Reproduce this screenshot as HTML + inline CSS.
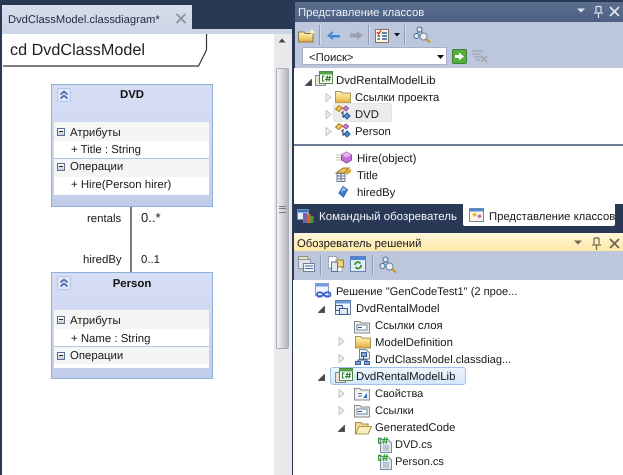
<!DOCTYPE html>
<html><head><meta charset="utf-8"><style>
html,body{margin:0;padding:0}
body{width:623px;height:475px;position:relative;overflow:hidden;background:#293955;font-family:"Liberation Sans",sans-serif;font-size:11.3px;color:#1a1a1a;text-rendering:geometricPrecision}
#w{position:absolute;left:0;top:0;width:623px;height:475px;overflow:hidden;filter:blur(.3px)}
.b{position:absolute}
.t{position:absolute;white-space:nowrap;line-height:16px;height:16px}
svg{position:absolute;overflow:visible}
.cls{position:absolute;left:51px;width:162px;background:linear-gradient(#d7ddf5,#ccd6f0 60%,#c0cce8);border:1px solid #8db0da;box-sizing:border-box}
.row{position:absolute;left:2px;width:155px;height:19px;background:#f5f5f5}
.wh{position:absolute;left:2px;width:155px;background:#fff}
.ln{position:absolute;left:2px;width:155px;height:1px;background:#b4c6e6}
.mn{position:absolute;left:5px;width:6px;height:6px;border:1px solid #5c6f8e;background:linear-gradient(#fff,#c4ccd9)}
.mn:after{content:"";position:absolute;left:1px;top:2px;width:4px;height:1px;background:#222}
.chev{position:absolute;left:5px;top:3px;width:12px;height:12px;border:1px solid #b5c4e0;background:#dfe6f8;border-radius:2px}
.sep{position:absolute;width:1px;background:#8f9ab3;border-right:1px solid #d5dcea}
.c{font-size:11.4px}
</style></head><body><div id="w">
<svg width="0" height="0" style="position:absolute"><defs>
<linearGradient id="gf" x1="0" y1="0" x2="0" y2="1"><stop offset="0" stop-color="#fdf0bb"/><stop offset=".5" stop-color="#f5d77e"/><stop offset="1" stop-color="#dca93a"/></linearGradient>
<symbol id="tri" viewBox="0 0 7 9"><path d="M1 0.500 L6 4.500 L1 8.500Z" fill="#f0f0f0" stroke="#c4c4c4"/></symbol>
<symbol id="open" viewBox="0 0 7 7"><path d="M6.500 0.500V6.500H0.500Z" fill="#444" stroke="#555"/></symbol>
<symbol id="folder" viewBox="0 0 16 14"><path d="M0.500 3V1.500H6L7 3H15.500V13H0.500Z" fill="url(#gf)" stroke="#a89660"/></symbol>
<symbol id="refs" viewBox="0 0 16 14"><path d="M0.500 3V1.500H6L7 3H15.500V13H0.500Z" fill="#ececec" stroke="#8a8a8a"/><rect x="3" y="5" width="10" height="5" fill="#fff" stroke="#6f87a8"/><path d="M4 7.500H8" stroke="#2f5a9c"/></symbol>
<symbol id="proj" viewBox="0 0 18 16"><rect x="0.500" y="4.500" width="10" height="10" fill="#e8e4d0" stroke="#7a8fa8"/><rect x="4.500" y="0.500" width="13" height="12" fill="#fff" stroke="#4f8a4a"/><rect x="5" y="1" width="12" height="2.500" fill="#4fa63f"/><path d="M9.500 5H7.500V10H9.500M12.500 4.500L11.500 10.500M15 4.500L14 10.500M10.500 6.500H16M10 8.500H15.500" stroke="#2f7a2a" fill="none" stroke-width="1.100"/></symbol>
<symbol id="cls" viewBox="0 0 16 15"><path d="M0.500 4L4 0.500L7.500 3L4 6.500Z" fill="#f3c24a" stroke="#a87f20"/><path d="M8 3.500L11 1L13.500 3.500L11 6Z" fill="#d77cd8" stroke="#8f4a9c"/><path d="M9 11L12 8L15 11L12 14Z" fill="#4a90dd" stroke="#245a9c"/><path d="M8 6V12H9M6 8H8" stroke="#333" fill="none"/></symbol>
<symbol id="cs" viewBox="0 0 14 16"><path d="M2.500 2.500H10L13.500 6V15.500H2.500Z" fill="#dfe6f0" stroke="#7f8da3"/><path d="M5 9H11M5 11H11M5 13H11" stroke="#97a5ba"/><path d="M3.500 1.500H0.500V6H3.500" stroke="#2e9a28" fill="none" stroke-width="1.400"/><path d="M6.500 0L5.500 7M9 0L8 7M4.500 2.200H10M4 4.600H9.500" stroke="#2e9a28" fill="none"/></symbol>
<symbol id="find" viewBox="0 0 18 18"><circle cx="6.500" cy="3.500" r="2.500" fill="#dfe8f5" stroke="#3f6a9c"/><circle cx="3.500" cy="10" r="2.500" fill="#dfe8f5" stroke="#3f6a9c"/><path d="M5.500 6L4 8M8 5.500L10 8" stroke="#3f6a9c"/><circle cx="10.500" cy="10.500" r="3.500" fill="#e9f0fa" stroke="#6f7f95"/><path d="M13 13L17 16.500" stroke="#cf9a2a" stroke-width="2.200"/></symbol>
</defs></svg>

<!-- left document well -->
<div class="b" style="left:2px;top:5px;width:190px;height:24px;background:linear-gradient(#d6deeb,#cdd6e6)"></div>
<div class="t" style="left:8px;top:12px;font-size:11.200px;color:#1f2a3c">DvdClassModel.classdiagram*</div>
<svg style="left:176px;top:14px" width="10" height="9"><path d="M0.500 0L9.500 9M9.500 0L0.500 9" stroke="#8a93a3" stroke-width="1.900"/></svg>
<div class="b" style="left:2px;top:29px;width:290px;height:5px;background:#cdd6e6"></div>
<div class="b" style="left:2px;top:34px;width:272px;height:441px;background:#fff"></div>
<div class="b" style="left:274px;top:34px;width:18px;height:441px;background:#e9e9ec"></div>
<svg style="left:278px;top:38px" width="8" height="5"><path d="M0.500 4.500L4 0.500L7.500 4.500Z" fill="#444"/></svg>
<div class="b" style="left:276px;top:68px;width:13px;height:281px;box-sizing:border-box;border:1px solid #a9adb5;border-radius:2px;background:linear-gradient(90deg,#f4f4f4,#d2d3d6 55%,#b2b4b8)"></div>
<div class="b" style="left:279px;top:206px;width:7px;height:5px;border-top:1px solid #7c7c7c;border-bottom:1px solid #7c7c7c"></div>
<div class="b" style="left:279px;top:208px;width:7px;height:1px;background:#7c7c7c"></div>

<!-- frame label -->
<svg style="left:3px;top:34px" width="206" height="33"><path d="M203.500 0V16L195.500 32H0" fill="none" stroke="#333" stroke-width="1.200"/></svg>
<div class="t" style="left:10px;top:39px;height:22px;line-height:22px;font-size:16.200px;color:#222">cd DvdClassModel</div>

<!-- DVD class -->
<div class="cls" style="top:84px;height:123px">
 <div class="chev"><svg style="left:1px;top:1px" width="10" height="10"><path d="M1.500 4.500L5 1.500L8.500 4.500M1.500 8.500L5 5.500L8.500 8.500" fill="none" stroke="#3a5fa8" stroke-width="1.500"/></svg></div>
 <div class="wh" style="top:37px;height:73px"></div>
 <div class="row" style="top:37px"></div>
 <div class="ln" style="top:73px"></div>
 <div class="row" style="top:74px;height:18px"></div>
 <div class="mn" style="top:43px"></div>
 <div class="mn" style="top:78px"></div>
</div>
<div class="t c" style="left:0;width:264px;text-align:center;top:87px;font-weight:bold;color:#111">DVD</div>
<div class="t c" style="left:70px;top:125px">Атрибуты</div>
<div class="t c" style="left:71px;top:142px">+ Title : String</div>
<div class="t c" style="left:70px;top:159px">Операции</div>
<div class="t c" style="left:71px;top:177px">+ Hire(Person hirer)</div>

<!-- connector -->
<div class="b" style="left:130px;top:207px;width:2px;height:66px;background:#7a7a7a"></div>
<div class="t c" style="left:87px;top:211px">rentals</div>
<div class="t" style="left:141px;top:210px;font-size:13px">0..*</div>
<div class="t c" style="left:83px;top:252px">hiredBy</div>
<div class="t c" style="left:141px;top:252px">0..1</div>

<!-- Person class -->
<div class="cls" style="top:272px;height:107px">
 <div class="chev"><svg style="left:1px;top:1px" width="10" height="10"><path d="M1.500 4.500L5 1.500L8.500 4.500M1.500 8.500L5 5.500L8.500 8.500" fill="none" stroke="#3a5fa8" stroke-width="1.500"/></svg></div>
 <div class="wh" style="top:37px;height:58px"></div>
 <div class="row" style="top:37px"></div>
 <div class="ln" style="top:73px"></div>
 <div class="row" style="top:74px;height:17px"></div>
 <div class="mn" style="top:43px"></div>
 <div class="mn" style="top:79px"></div>
</div>
<div class="t c" style="left:0;width:264px;text-align:center;top:276px;font-weight:bold;color:#111">Person</div>
<div class="t c" style="left:70px;top:313px">Атрибуты</div>
<div class="t c" style="left:71px;top:331px">+ Name : String</div>
<div class="t c" style="left:70px;top:348px">Операции</div>

<!-- class view panel -->
<div class="b" style="left:295px;top:2px;width:328px;height:20px;background:linear-gradient(#5a6e90,#4d6082)"></div>
<div class="t" style="left:298px;top:5px;color:#eef1f6;font-size:11.300px">Представление классов</div>
<svg style="left:577px;top:6px" width="44" height="12"><path d="M0 2.500H8L4 6.500Z" fill="#dfe4ee"/><path d="M19 0.500V6M24 0.500V6M17 7H26M21.500 7V12M19 0.500H24" stroke="#dfe4ee" fill="none" stroke-width="1.200"/><path d="M33 1L42 10M42 1L33 10" stroke="#dfe4ee" stroke-width="1.800"/></svg>
<div class="b" style="left:295px;top:22px;width:328px;height:46px;background:#bcc7de"></div>
<svg style="left:298px;top:28px" width="18" height="15" viewBox="0 0 18 15"><path d="M0.500 14V4H6L7 5.500H15V14Z" fill="url(#gf)" stroke="#8c7a46"/><path d="M14 0L15 3L18 4L15 5L14 8L13 5L10 4L13 3Z" fill="#fff6b0"/></svg>
<div class="sep" style="left:319px;top:25px;height:20px"></div>
<svg style="left:327px;top:31px" width="13" height="9"><path d="M0 4.500L6 0V2.500H13V6.500H6V9Z" fill="#3f86cf"/><path d="M6 2.500H13V4H3Z" fill="#a9d1f2"/></svg>
<svg style="left:350px;top:31px" width="13" height="9"><path d="M13 4.500L7 0V2.500H0V6.500H7V9Z" fill="#9aa1ae"/></svg>
<div class="sep" style="left:368px;top:25px;height:20px"></div>
<svg style="left:375px;top:27px" width="15" height="16"><rect x="0.500" y="2.500" width="13" height="13" fill="#fdf7e0" stroke="#7f7560"/><path d="M2 5L3.500 7L6 3.500" fill="none" stroke="#d22" stroke-width="1.300"/><path d="M7 6H12M7 9H12M7 12H12M2.500 9H5M2.500 12H5" stroke="#2f5fa8" stroke-width="1.400"/></svg>
<svg style="left:394px;top:33px" width="6" height="4"><path d="M0 0H6L3 3.500Z" fill="#111"/></svg>
<div class="sep" style="left:404px;top:25px;height:20px"></div>
<svg style="left:413px;top:26px" width="18" height="18"><use href="#find"/></svg>
<div class="b" style="left:302px;top:47px;width:145px;height:18px;box-sizing:border-box;background:#fff;border:1px solid #a7b1c6"></div>
<div class="t" style="left:309px;top:50px;font-size:11.300px">&lt;Поиск&gt;</div>
<svg style="left:437px;top:55px" width="7" height="4"><path d="M0 0H7L3.500 4Z" fill="#111"/></svg>
<svg style="left:452px;top:49px" width="15" height="15"><rect x="0.500" y="0.500" width="14" height="14" rx="1.500" fill="#55ad3e" stroke="#3d7f33"/><path d="M3 6H7V3.500L12 7.500L7 11.500V9H3Z" fill="#fff"/></svg>
<svg style="left:472px;top:50px" width="16" height="14"><path d="M0 1H11M0 4H9M2 7H9M4 10H8" stroke="#a3aab8" stroke-width="1.500"/><path d="M9 6L15 12M15 6L9 12" stroke="#a5a5ac" stroke-width="1.600"/></svg>

<div class="b" style="left:294px;top:68px;width:329px;height:136px;background:#fff"></div>
<div class="b" style="left:294px;top:144px;width:329px;height:2px;background:#6e7b92"></div>

<svg style="left:305px;top:79px" width="7" height="7"><use href="#open"/></svg>
<svg style="left:315px;top:71px" width="18" height="16"><use href="#proj"/></svg>
<div class="t" style="left:336px;top:73px;font-size:11.400px">DvdRentalModelLib</div>
<svg style="left:325px;top:93px" width="7" height="9"><use href="#tri"/></svg>
<svg style="left:335px;top:90px" width="16" height="14"><use href="#folder"/></svg>
<div class="t" style="left:355px;top:90px">Ссылки проекта</div>
<div class="b" style="left:333px;top:103px;width:59px;height:19px;background:#ececec;border-radius:3px;box-shadow:inset 0 0 0 1px #e2e2e2"></div>
<svg style="left:325px;top:110px" width="7" height="9"><use href="#tri"/></svg>
<svg style="left:335px;top:105px" width="16" height="15"><use href="#cls"/></svg>
<div class="t" style="left:355px;top:107px">DVD</div>
<svg style="left:325px;top:127px" width="7" height="9"><use href="#tri"/></svg>
<svg style="left:335px;top:123px" width="16" height="15"><use href="#cls"/></svg>
<div class="t" style="left:355px;top:124px">Person</div>

<svg style="left:336px;top:151px" width="16" height="13"><path d="M0 4H6M0 6.500H5M0 9H6" stroke="#c9c7a6"/><path d="M10.500 1L15.500 4V9L10.500 12L5.500 9V4Z" fill="#c66fd6" stroke="#8d4b9f"/><path d="M10.500 1L15 4L10.500 6.500L6 4Z" fill="#e7b6ee"/></svg>
<div class="t" style="left:357px;top:151px;font-size:11.500px">Hire(object)</div>
<svg style="left:335px;top:167px" width="17" height="15"><path d="M1 6L8 1H14L9 6Z" fill="#f0c35a" stroke="#9a7a30"/><path d="M2 6.500H10V14.500H2Z" fill="#e9eef5" stroke="#6d7d93"/><path d="M2 9H10M2 11.700H10M6 6.500V14.500" stroke="#6d7d93"/><path d="M10 5L16 1.500V5L12 8Z" fill="#d8a838"/></svg>
<div class="t" style="left:357px;top:168px">Title</div>
<svg style="left:338px;top:186px" width="10" height="12"><path d="M5 0.500L9.500 3.500L5.500 11L1 7Z" fill="#3f82d2" stroke="#2a5f9e"/><path d="M5 1L9 3.500L2.500 6Z" fill="#8fc0ee"/></svg>
<div class="t" style="left:357px;top:185px">hiredBy</div>

<!-- tabs -->
<svg style="left:297px;top:209px" width="18" height="15"><rect x="0.500" y="0.500" width="11" height="10" fill="#e5ecf7" stroke="#6f8ec0"/><rect x="1" y="1" width="10" height="2.500" fill="#3f6fb8"/><rect x="6" y="4" width="4" height="10" fill="#7a5fa8"/><rect x="10" y="5" width="3.500" height="9" fill="#cf6b2a"/><rect x="13.500" y="7" width="3" height="7" fill="#3f9a3a"/></svg>
<div class="t" style="left:319px;top:209px;color:#f2f4f8;font-size:11.500px">Командный обозреватель</div>
<div class="b" style="left:463px;top:204px;width:152px;height:22px;background:#fff;border-radius:0 0 2px 2px"></div>
<svg style="left:469px;top:208px" width="16" height="15"><rect x="0.500" y="0.500" width="14" height="13" fill="#fdf6e0" stroke="#6f88b0"/><rect x="1" y="1" width="13" height="2.500" fill="#4f86cc"/><path d="M3 6L6 4.500L8 7L5 9Z" fill="#e5b93f"/><path d="M8 8L11 6L13 8.500L10 10.500Z" fill="#c66fd6"/></svg>
<div class="t" style="left:489px;top:209px;font-size:11.300px">Представление классов</div>

<!-- solution explorer -->
<div class="b" style="left:294px;top:233px;width:329px;height:18px;background:linear-gradient(#fff6dc,#ffe8a6)"></div>
<div class="t" style="left:297px;top:236px;font-size:11.300px">Обозреватель решений</div>
<svg style="left:574px;top:237px" width="47" height="13"><path d="M0 3.500H8L4 7.500Z" fill="#6f674c"/><path d="M20 1V7M25 1V7M18 8H27M22.500 8V13M20 1H25" stroke="#6f674c" fill="none" stroke-width="1.200"/><path d="M36 2L45 11M45 2L36 11" stroke="#6f674c" stroke-width="1.800"/></svg>
<div class="b" style="left:294px;top:251px;width:329px;height:29px;background:#bcc7de"></div>
<svg style="left:298px;top:256px" width="17" height="16"><path d="M0.500 0.500H10V3.500H0.500Z" fill="#e9dfc0" stroke="#8f8f8f"/><rect x="0.500" y="3.500" width="12" height="9" fill="#dfe3ea" stroke="#8f959f"/><rect x="5.500" y="7.500" width="11" height="8" fill="#f4f6fa" stroke="#6f7f95"/><path d="M7 10H15M7 12.500H15" stroke="#3f6fae"/></svg>
<div class="sep" style="left:320px;top:255px;height:20px"></div>
<svg style="left:328px;top:256px" width="16" height="16"><path d="M0.500 0.500H9V4H14V15.500H4V12H0.500Z" fill="#fff" stroke="#7f8a9a" stroke-dasharray="2 1"/><path d="M8 4H15.500V11H8Z" fill="#f0d27a" stroke="#9a7f3a"/><path d="M3.500 6H9.500V15.500H3.500Z" fill="#dfe8f5" stroke="#4f78ae"/></svg>
<svg style="left:350px;top:256px" width="16" height="16"><rect x="0.500" y="0.500" width="15" height="15" fill="#e5ecf7" stroke="#5f82b5"/><rect x="1" y="1" width="14" height="3" fill="#4a87d2"/><path d="M5 9A3 3 0 0 1 10.500 7.500M11 9A3 3 0 0 1 5.500 11" fill="none" stroke="#2f9a2f" stroke-width="1.800"/></svg>
<div class="sep" style="left:372px;top:255px;height:20px"></div>
<svg style="left:379px;top:256px" width="18" height="18"><use href="#find"/></svg>

<div class="b" style="left:293px;top:280px;width:330px;height:195px;background:#fff"></div>

<svg style="left:315px;top:283px" width="18" height="16"><rect x="0.500" y="0.500" width="13" height="12" fill="#f2f6fc" stroke="#8aa0bf"/><rect x="1" y="1" width="12" height="2.500" fill="#6f9be0"/><path d="M2 11.500C2 8.500 6.500 8.500 8.500 11.500C10.500 14.500 15.500 14.500 15.500 11.500C15.500 8.500 10.500 8.500 8.500 11.500C6.500 14.500 2 14.500 2 11.500Z" fill="none" stroke="#3c5fd0" stroke-width="1.800"/></svg>
<div class="t" style="left:336px;top:284px;font-size:11.100px">Решение "GenCodeTest1" (2 прое...</div>
<svg style="left:318px;top:306px" width="7" height="7"><use href="#open"/></svg>
<svg style="left:335px;top:300px" width="17" height="16"><rect x="0.500" y="0.500" width="15" height="14" fill="#f1f5fb" stroke="#5a7aa5"/><rect x="1" y="1" width="14" height="2.500" fill="#6f9be0"/><rect x="0.500" y="5.500" width="7" height="5" fill="#dfe8f5" stroke="#3a5a90"/><rect x="4.500" y="8.500" width="8" height="6" fill="#dfe8f5" stroke="#3a5a90"/></svg>
<div class="t" style="left:356px;top:301px">DvdRentalModel</div>
<svg style="left:354px;top:320px" width="16" height="14"><use href="#refs"/></svg>
<div class="t" style="left:375px;top:318px">Ссылки слоя</div>
<svg style="left:338px;top:337px" width="7" height="9"><use href="#tri"/></svg>
<svg style="left:355px;top:335px" width="16" height="14"><use href="#folder"/></svg>
<div class="t" style="left:375px;top:335px">ModelDefinition</div>
<svg style="left:338px;top:354px" width="7" height="9"><use href="#tri"/></svg>
<svg style="left:355px;top:349px" width="15" height="16"><path d="M4.500 0.500H11L14.500 4V10H4.500Z" fill="#f1f5fb" stroke="#6f84a5"/><rect x="6.500" y="3.500" width="5" height="4" fill="#7ea6dd" stroke="#3a5a90"/><path d="M8.500 7.500V11M3 13V11H12V13" stroke="#3a5a90" fill="none"/><rect x="0.500" y="12.500" width="5" height="3" fill="#7ea6dd" stroke="#3a5a90"/><rect x="9.500" y="12.500" width="5" height="3" fill="#7ea6dd" stroke="#3a5a90"/></svg>
<div class="t" style="left:375px;top:352px;font-size:11.100px">DvdClassModel.classdiag...</div>
<svg style="left:318px;top:374px" width="7" height="7"><use href="#open"/></svg>
<div class="b" style="left:330px;top:367px;width:136px;height:18px;box-sizing:border-box;border:1px solid #9cc3ea;border-radius:3px;background:linear-gradient(#eef6fe,#d3e6fa)"></div>
<svg style="left:335px;top:368px" width="18" height="16"><use href="#proj"/></svg>
<div class="t" style="left:356px;top:369px;font-size:11.400px">DvdRentalModelLib</div>
<svg style="left:338px;top:389px" width="7" height="9"><use href="#tri"/></svg>
<svg style="left:354px;top:387px" width="16" height="14"><path d="M0.500 3V1.500H6L7 3H15.500V13H0.500Z" fill="#ececec" stroke="#8a8a8a"/><path d="M3 5H13V11H3Z" fill="#fff"/><path d="M4 6.500H8M4 9H8" stroke="#2f5a9c"/><path d="M9 11L13 6V11Z" fill="#2f6fc0"/></svg>
<div class="t" style="left:375px;top:386px;font-size:11px">Свойства</div>
<svg style="left:338px;top:406px" width="7" height="9"><use href="#tri"/></svg>
<svg style="left:354px;top:404px" width="16" height="14"><use href="#refs"/></svg>
<div class="t" style="left:375px;top:403px;font-size:11px">Ссылки</div>
<svg style="left:338px;top:425px" width="7" height="7"><use href="#open"/></svg>
<svg style="left:355px;top:421px" width="17" height="14"><path d="M0.500 13V1.500H6L7 3H13V5.500H16.500L13 13Z" fill="#f6dd94" stroke="#a08a50"/><path d="M4 5.500H16.500L13 13H1Z" fill="#fbeeb8" stroke="#b09a58"/></svg>
<div class="t" style="left:375px;top:420px">GeneratedCode</div>
<svg style="left:378px;top:437px" width="14" height="16"><use href="#cs"/></svg>
<div class="t" style="left:395px;top:437px;font-size:11px">DVD.cs</div>
<svg style="left:378px;top:454px" width="14" height="16"><use href="#cs"/></svg>
<div class="t" style="left:395px;top:454px;font-size:11px">Person.cs</div>
</div></body></html>
